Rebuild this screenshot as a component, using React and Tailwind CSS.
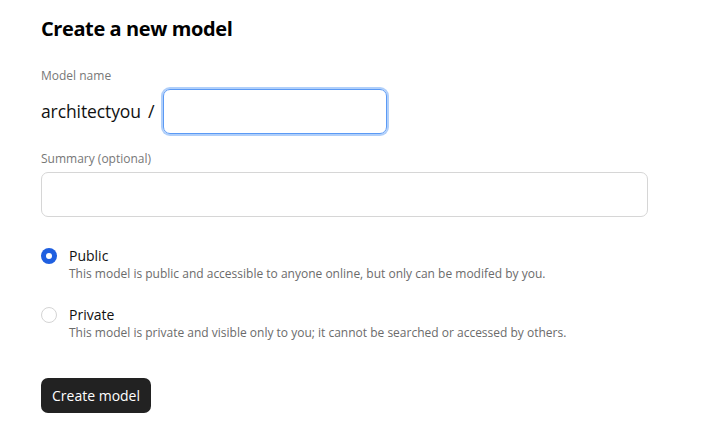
import { useState } from "react";

function RadioOption({ checked, label, description, onSelect }) {
  return (
    <label className="flex items-start gap-[12px] cursor-pointer" onClick={onSelect}>
      <span
        className={`mt-[1px] flex h-[16px] w-[16px] shrink-0 items-center justify-center rounded-full ${
          checked ? "bg-[#1f5fe0]" : "border border-[#d4d4d4] bg-white"
        }`}
      >
        {checked && <span className="h-[6px] w-[6px] rounded-full bg-white" />}
      </span>
      <span className="flex flex-col">
        <span className="text-[14px] leading-[18px] text-[#111]">{label}</span>
        <span className="mt-[1px] text-[12px] leading-[16px] text-[#6b6b6b]">
          {description}
        </span>
      </span>
    </label>
  );
}

export default function App() {
  const [visibility, setVisibility] = useState("public");

  return (
    <div
      className="min-h-screen bg-white pl-[41px] pt-[16px]"
      style={{ fontFamily: '"Open Sans", "Noto Sans CJK KR", sans-serif' }}
    >
      <h1 className="text-[20px] font-bold leading-[26px] tracking-[-0.4px] text-black">
        Create a new model
      </h1>

      <p className="mt-[26px] text-[12px] leading-[16px] text-[#777]">Model name</p>
      <div className="mt-[5px] flex items-center">
        <span className="text-[17.5px] tracking-[-0.1px] text-[#111]">architectyou</span>
        <span className="ml-[7px] mr-[8px] text-[18px] text-[#111]">/</span>
        <input
          autoFocus
          className="h-[45px] w-[224px] rounded-[7px] border border-[#5b9af5] px-[13px] text-[18px] caret-black outline-none shadow-[0_0_0_2px_#b0cffa]"
        />
      </div>

      <p className="mt-[17px] text-[12px] leading-[16px] text-[#777]">
        Summary (optional)
      </p>
      <input className="mt-[5px] h-[45px] w-[607px] rounded-[7px] border border-[#d6d6d6] px-[13px] text-[14px] outline-none" />

      <div className="mt-[30px] flex flex-col gap-[24px]">
        <RadioOption
          checked={visibility === "public"}
          onSelect={() => setVisibility("public")}
          label="Public"
          description="This model is public and accessible to anyone online, but only can be modifed by you."
        />
        <RadioOption
          checked={visibility === "private"}
          onSelect={() => setVisibility("private")}
          label="Private"
          description="This model is private and visible only to you; it cannot be searched or accessed by others."
        />
      </div>

      <button className="mt-[37px] h-[35px] rounded-[7px] bg-[#222] px-[11px] text-[14px] text-white">
        Create model
      </button>
    </div>
  );
}
